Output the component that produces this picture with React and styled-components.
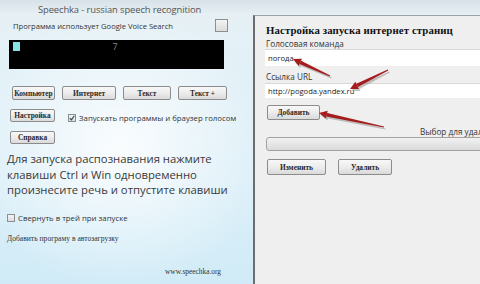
import styled, { createGlobalStyle } from "styled-components";

const Global = createGlobalStyle`
  html, body { margin: 0; padding: 0; }
  body { width: 480px; height: 284px; overflow: hidden; background: #dfeef5; }
`;

const Screen = styled.div`
  position: relative;
  width: 480px;
  height: 284px;
  overflow: hidden;
`;

const MainWindow = styled.div`
  display: flex;
  flex-direction: column;
  width: 480px;
  height: 284px;
  background:
    radial-gradient(ellipse 150px 140px at 120px 150px, rgba(255,255,255,0.85), rgba(255,255,255,0) 100%),
    linear-gradient(180deg, #d7e2e8 0px, #e6eff3 14px, #e4f1f7 40px, #dceff8 180px, #d0ebf7 284px);
  font-family: "Open Sans", "Noto Sans", sans-serif;
  color: #222;
`;

const TitleBar = styled.div`
  height: 19px;
  display: flex;
  align-items: center;
  padding-left: 38px;
  font-size: 9.4px;
  color: #555;
  letter-spacing: -0.1px;
`;

const GoogleRow = styled.div`
  display: flex;
  align-items: center;
  width: 228px;
  height: 13px;
  padding-left: 13px;
  box-sizing: border-box;
  font-size: 7.6px;
  color: #333;
  margin-bottom: 8px;
`;

const Spacer = styled.div`
  flex: 1;
`;

const Box = styled.span`
  display: inline-block;
  flex: none;
  width: ${(p) => p.size}px;
  height: ${(p) => p.size}px;
  box-sizing: border-box;
  border: 1px solid #8a8f93;
  background: linear-gradient(180deg, #f4f4f4, #dcdcdc);
  position: relative;
`;

const Console = styled.div`
  margin-left: 9px;
  width: 215px;
  height: 29px;
  background: #000;
  display: flex;
  align-items: flex-start;
  padding: 2px 4px;
  box-sizing: border-box;
  font-size: 9px;
  color: #888;
`;

const Caret = styled.div`
  width: 7px;
  height: 9px;
  background: #86e3e0;
`;

const ConsoleText = styled.div`
  flex: 1;
  text-align: center;
  line-height: 9px;
  padding-right: 10px;
`;

const ButtonRow = styled.div`
  display: flex;
  align-items: center;
  gap: ${(p) => p.gap || 6}px;
  padding-left: ${(p) => p.left}px;
  margin-top: ${(p) => p.top}px;
`;

const Btn = styled.div`
  width: ${(p) => p.w}px;
  height: ${(p) => p.h || 13}px;
  box-sizing: border-box;
  border: 1px solid #8c8c8c;
  border-radius: 2px;
  background: linear-gradient(180deg, #f8f8f8 0%, #ececec 50%, #dadada 100%);
  display: flex;
  align-items: center;
  justify-content: center;
  font-family: "Liberation Serif", serif;
  font-weight: bold;
  font-size: ${(p) => p.fs || 7.4}px;
  color: #2a2a2a;
`;

const CheckOption = styled.div`
  display: flex;
  align-items: center;
  margin-top: 5px;
`;

const CheckLabel = styled.span`
  margin-left: ${(p) => p.gap || 3}px;
  font-size: ${(p) => p.fs || 7.8}px;
  color: #333;
`;

const Hint = styled.div`
  margin-top: 7px;
  padding-left: 7px;
  font-size: 11.3px;
  line-height: 15.5px;
  color: #3a3a3a;
  font-family: "Open Sans", sans-serif;
`;

const CheckRow = styled.div`
  display: flex;
  align-items: center;
  padding-left: 7px;
  margin-top: ${(p) => p.top}px;
`;

const SerifLink = styled.div`
  font-family: "Liberation Serif", serif;
  font-size: ${(p) => p.fs || 7.6}px;
  color: #333;
  padding-left: ${(p) => p.left}px;
  margin-top: ${(p) => p.top}px;
`;

const Dialog = styled.div`
  position: absolute;
  left: 253px;
  top: 15px;
  width: 240px;
  height: 280px;
  box-sizing: border-box;
  background: #efefef;
  border-left: 2px solid #6b6d6e;
  border-top: 1px solid #9aa3a8;
  display: flex;
  flex-direction: column;
  padding-left: 11px;
  font-family: "Open Sans", "Noto Sans", sans-serif;
`;

const DialogTitle = styled.div`
  margin-top: 8px;
  height: 13px;
  line-height: 13px;
  font-family: "Liberation Serif", serif;
  font-weight: bold;
  font-size: 10.8px;
  color: #111;
  letter-spacing: 0.1px;
`;

const FieldLabel = styled.div`
  height: 10px;
  line-height: 10px;
  font-size: 8.2px;
  color: #333;
  margin-top: ${(p) => p.top}px;
`;

const Field = styled.div`
  margin-top: ${(p) => p.top}px;
  margin-left: -1px;
  height: ${(p) => p.h}px;
  box-sizing: border-box;
  background: #fff;
  border-top: 1px solid #d8d8d8;
  display: flex;
  align-items: center;
  padding-left: 3px;
  font-size: 7.6px;
  color: #222;
`;

const RemoveLabel = styled.div`
  margin-top: 7px;
  height: 10px;
  line-height: 10px;
  padding-left: 154px;
  font-size: 8.2px;
  color: #333;
  white-space: nowrap;
`;

const Combo = styled.div`
  height: 14px;
  box-sizing: border-box;
  border: 1px solid #a2a2a2;
  border-radius: 3px;
  background: linear-gradient(180deg, #f2f2f2, #dadada);
`;

const Arrows = styled.svg`
  position: absolute;
  left: 0;
  top: 0;
  pointer-events: none;
`;

function Arrow({ x1, y1, x2, y2 }) {
  const dx = x2 - x1;
  const dy = y2 - y1;
  const len = Math.hypot(dx, dy);
  const ux = dx / len;
  const uy = dy / len;
  const bx = x2 - ux * 8;
  const by = y2 - uy * 8;
  const px = -uy * 4;
  const py = ux * 4;
  const head = `${x2},${y2} ${bx + px},${by + py} ${bx - px},${by - py}`;
  const tail = `${x1 - uy * 0.6},${y1 + ux * 0.6} ${bx + px * 0.45},${by + py * 0.45} ${bx - px * 0.45},${by - py * 0.45} ${x1 + uy * 0.6},${y1 - ux * 0.6}`;
  return (
    <g>
      <g transform="translate(1.5,2)" fill="#7d7d7d" opacity="0.45">
        <polygon points={tail} />
        <polygon points={head} />
      </g>
      <g fill="#a41c1c">
        <polygon points={tail} />
        <polygon points={head} />
      </g>
    </g>
  );
}

export default function App() {
  return (
    <Screen>
      <Global />
      <MainWindow>
        <TitleBar>Speechka - russian speech recognition</TitleBar>
        <GoogleRow>
          Программа использует Google Voice Search
          <Spacer />
          <Box size={13} />
        </GoogleRow>
        <Console>
          <Caret />
          <ConsoleText>7</ConsoleText>
        </Console>
        <ButtonRow left={12} top={17} gap={7}>
          <Btn w={43} h={14}>Компьютер</Btn>
          <Btn w={54} h={14}>Интернет</Btn>
          <Btn w={48} h={14}>Текст</Btn>
          <Btn w={49} h={14}>Текст +</Btn>
        </ButtonRow>
        <ButtonRow left={10} top={8} gap={13}>
          <Btn w={45}>Настройка</Btn>
          <CheckOption>
            <Box size={8}>
              <svg width="6" height="6" viewBox="0 0 6 6" style={{ position: "absolute", left: 0, top: 0 }}>
                <path d="M0.8 3.2 L2.4 4.8 L5.3 0.8" stroke="#2d3f55" strokeWidth="1.1" fill="none" />
              </svg>
            </Box>
            <CheckLabel>Запускать программы и браузер голосом</CheckLabel>
          </CheckOption>
        </ButtonRow>
        <ButtonRow left={10} top={8}>
          <Btn w={45}>Справка</Btn>
        </ButtonRow>
        <Hint>
          Для запуска распознавания нажмите
          <br />
          клавиши Ctrl и Win одновременно
          <br />
          произнесите речь и отпустите клавиши
        </Hint>
        <CheckRow top={15}>
          <Box size={8} />
          <CheckLabel>Свернуть в трей при запуске</CheckLabel>
        </CheckRow>
        <SerifLink left={7} top={11}>Добавить програму в автозагрузку</SerifLink>
        <SerifLink left={165} top={24} fs={7.4}>www.speechka.org</SerifLink>
      </MainWindow>

      <Dialog>
        <DialogTitle>Настройка запуска интернет страниц</DialogTitle>
        <FieldLabel top={2}>Голосовая команда</FieldLabel>
        <Field top={0} h={17}>погода</Field>
        <FieldLabel top={6}>Ссылка URL</FieldLabel>
        <Field top={1} h={15}>http://pogoda.yandex.ru</Field>
        <ButtonRow left={1} top={7}>
          <Btn w={53} h={15}>Добавить</Btn>
        </ButtonRow>
        <RemoveLabel>Выбор для удаления</RemoveLabel>
        <Combo />
        <ButtonRow left={1} top={8} gap={12}>
          <Btn w={59} h={16}>Изменить</Btn>
          <Btn w={54} h={16}>Удалить</Btn>
        </ButtonRow>
      </Dialog>

      <Arrows width="480" height="284">
        <Arrow x1={330} y1={76} x2={293} y2={59} />
        <Arrow x1={388} y1={70} x2={350} y2={89} />
        <Arrow x1={384} y1={127} x2={319} y2={113} />
      </Arrows>
    </Screen>
  );
}
